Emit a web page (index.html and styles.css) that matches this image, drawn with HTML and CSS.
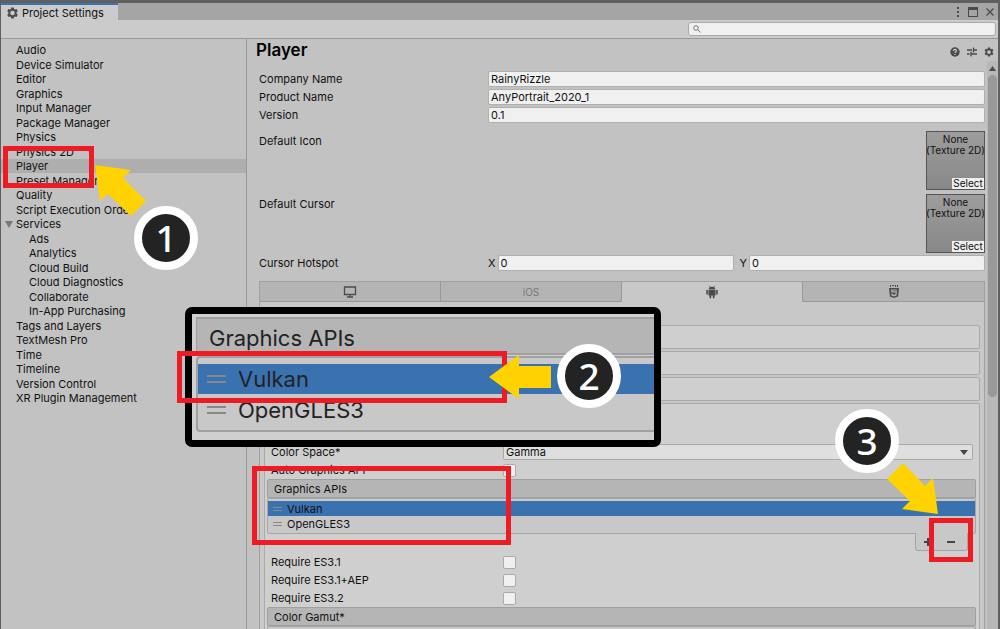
FILE: index.html
```html
<!DOCTYPE html>
<html lang="en">
<head>
<meta charset="utf-8">
<title>Project Settings</title>
<link rel="stylesheet" href="styles.css">
</head>
<body>
<svg class="defs" aria-hidden="true">
  <symbol id="gear" viewBox="0 0 24 24"><path fill-rule="evenodd" d="M9.5 1h5l.7 3.2 1.8 1 3.1-1 2.5 4.3-2.4 2.2v2.6l2.4 2.2-2.5 4.3-3.1-1-1.8 1-.7 3.2h-5l-.7-3.2-1.8-1-3.1 1-2.5-4.3 2.4-2.2v-2.6L1.400 8.500l2.500-4.300 3.100 1 1.800-1zM12 7.500a4.500 4.500 0 1 0 0 9a4.500 4.500 0 0 0 0-9z"/></symbol>
</svg>
<div class="window">
  <header class="tabbar">
    <div class="tab"><svg class="tab-icon"><use href="#gear"/></svg>Project Settings</div>
    <div class="window-buttons">
      <button aria-label="Menu"><svg width="4" height="12" viewBox="0 0 4 12"><path d="M1 1h2v2H1zM1 5h2v2H1zM1 9h2v2H1z"/></svg></button>
      <button aria-label="Maximize"><svg width="10" height="10" viewBox="0 0 10 10"><path fill-rule="evenodd" d="M0 0h10v10H0zM1 3v6h8V3z"/></svg></button>
      <button aria-label="Close"><svg width="8" height="8" viewBox="0 0 8 8"><path class="line" d="M.5.5l7 7M7.500.5l-7 7"/></svg></button>
    </div>
  </header>
  <div class="toolbar">
    <label class="search"><svg width="8" height="8" viewBox="0 0 8 8"><circle class="thin" cx="3" cy="3" r="2.300"/><path class="thin" d="M4.800 4.800L7.500 7.500"/></svg><input type="search" aria-label="Search settings"></label>
  </div>
  <div class="content">
    <nav class="sidebar">
      <ul>
        <li><a href="#">Audio</a></li>
        <li><a href="#">Device Simulator</a></li>
        <li><a href="#">Editor</a></li>
        <li><a href="#">Graphics</a></li>
        <li><a href="#">Input Manager</a></li>
        <li><a href="#">Package Manager</a></li>
        <li><a href="#">Physics</a></li>
        <li><a href="#">Physics 2D</a></li>
        <li class="selected"><a href="#">Player</a></li>
        <li><a href="#">Preset Manager</a></li>
        <li><a href="#">Quality</a></li>
        <li><a href="#">Script Execution Order</a></li>
        <li class="parent"><svg width="8" height="7" viewBox="0 0 8 7"><path d="M0 0h8L4 7z"/></svg><a href="#">Services</a></li>
        <li class="child"><a href="#">Ads</a></li>
        <li class="child"><a href="#">Analytics</a></li>
        <li class="child"><a href="#">Cloud Build</a></li>
        <li class="child"><a href="#">Cloud Diagnostics</a></li>
        <li class="child"><a href="#">Collaborate</a></li>
        <li class="child"><a href="#">In-App Purchasing</a></li>
        <li><a href="#">Tags and Layers</a></li>
        <li><a href="#">TextMesh Pro</a></li>
        <li><a href="#">Time</a></li>
        <li><a href="#">Timeline</a></li>
        <li><a href="#">Version Control</a></li>
        <li><a href="#">XR Plugin Management</a></li>
      </ul>
    </nav>
    <main class="main">
      <div class="title-row">
        <h1>Player</h1>
        <div class="title-icons">
          <button aria-label="Help"><svg width="10" height="10" viewBox="0 0 10 10"><circle cx="5" cy="5" r="4.700"/><path class="mark" d="M3.500 3.900c0-2 3-2 3-.2 0 1.100-1.500 1.100-1.500 2.400M5 7v1.100"/></svg></button>
          <button aria-label="Presets"><svg width="10" height="10" viewBox="0 0 10 10"><path class="line" d="M0 3h5M6.500 3H10M6.500 .5v5M0 7h2.500M4 7h6M4 4.800v4.700"/></svg></button>
          <button aria-label="Options"><svg width="10" height="10"><use href="#gear"/></svg></button>
        </div>
      </div>
      <div class="scroll">
        <div class="page">
          <div class="fields">
            <label for="company">Company Name</label><input id="company" type="text" value="RainyRizzle">
            <label for="product">Product Name</label><input id="product" type="text" value="AnyPortrait_2020_1">
            <label for="version">Version</label><input id="version" type="text" value="0.1">
          </div>
          <div class="texture-row"><span>Default Icon</span><div class="texture"><span>None<br>(Texture 2D)</span><button>Select</button></div></div>
          <div class="texture-row"><span>Default Cursor</span><div class="texture"><span>None<br>(Texture 2D)</span><button>Select</button></div></div>
          <div class="fields hotspot">
            <span>Cursor Hotspot</span>
            <div class="vector"><label for="hx">X</label><input id="hx" type="text" value="0"><label for="hy">Y</label><input id="hy" type="text" value="0"></div>
          </div>
          <section class="platform">
            <div class="platform-tabs">
              <button aria-label="Standalone"><svg width="14" height="12" viewBox="0 0 14 12"><path class="line" d="M1.500 1h11v7.500h-11zM7 8.500V11M4 11h6"/></svg></button>
              <button>iOS</button>
              <button class="active" aria-label="Android"><svg width="12" height="14" viewBox="0 0 12 14"><path d="M2.500 4.500a3.500 3 0 0 1 1.200-2L3 1l.5-.3.9 1.300a4 4 0 0 1 3.200 0L8.500.7 9 1l-.7 1.500a3.500 3 0 0 1 1.200 2zM2.500 5h7v5.500h-1v2.800H6.800v-2.800H5.200v2.800H3.500v-2.800h-1zM.3 5h1.600v4.500H.3zM10.100 5h1.600v4.500h-1.600z"/></svg></button>
              <button aria-label="WebGL"><svg width="10" height="13" viewBox="0 0 10 13"><path d="M1 0h1v2H1zM3 0h2v1H3zM6 0h1v2H6zM8 0h1v2H8z"/><path fill-rule="evenodd" d="M0 3h10l-.9 8.500L5 13 .9 11.500zM2 4.500l.4 3h4.300l-.2 1.700L5 9.700l-1.500-.5-.1-.8H2.200l.3 2L5 11.400l2.500-1 .5-4.200H3.500V5.500h4.600l.1-1z"/></svg></button>
            </div>
            <div class="platform-body">
              <button class="foldout" aria-label="Icon"></button>
              <button class="foldout" aria-label="Resolution and Presentation"></button>
              <button class="foldout" aria-label="Splash Image"></button>
              <div class="group">
                <div class="setting"><label for="space">Color Space*</label><select id="space"><option>Gamma</option></select></div>
                <div class="setting"><label for="auto">Auto Graphics API</label><input id="auto" type="checkbox"></div>
                <h2 class="list-title">Graphics APIs</h2>
                <ul class="api-list"><li class="picked"><i class="grip"></i>Vulkan</li><li><i class="grip"></i>OpenGLES3</li></ul>
                <div class="list-buttons">
                  <button aria-label="Add"><svg width="8" height="8" viewBox="0 0 8 8"><path class="bold" d="M0 4h8M4 0v8"/></svg></button>
                  <button aria-label="Remove"><svg width="8" height="8" viewBox="0 0 8 8"><path class="bold" d="M0 4h8"/></svg></button>
                </div>
                <div class="setting"><label for="es31">Require ES3.1</label><input id="es31" type="checkbox"></div>
                <div class="setting"><label for="aep">Require ES3.1+AEP</label><input id="aep" type="checkbox"></div>
                <div class="setting"><label for="es32">Require ES3.2</label><input id="es32" type="checkbox"></div>
                <h2 class="list-title">Color Gamut*</h2>
                <ul class="api-list"><li></li></ul>
              </div>
            </div>
          </section>
        </div>
        <div class="scrollbar"><svg width="7" height="5" viewBox="0 0 7 5"><path d="M3.500 0L7 5H0z"/></svg><div class="thumb"></div></div>
      </div>
    </main>
  </div>
</div>

<div class="magnifier">
  <div class="mag-title">Graphics APIs</div>
  <ul class="mag-list"><li class="picked"><i class="grip"></i>Vulkan</li><li><i class="grip"></i>OpenGLES3</li></ul>
</div>
<div class="frame frame-player"></div>
<div class="frame frame-vulkan"></div>
<div class="frame frame-apis"></div>
<div class="frame frame-remove"></div>
<svg class="arrow arrow-player" width="51" height="51" viewBox="0 0 51 51"><path d="M0 0L36 5 28 13 51 36 36 51 13 29 5 36z"/></svg>
<svg class="arrow arrow-vulkan" width="62" height="44" viewBox="0 0 62 44"><path d="M0 22L30 0V11H62V33H30V44z"/></svg>
<svg class="arrow arrow-remove" width="51" height="51" viewBox="0 0 51 51"><path d="M51 51L46 15 38 23 16 0 0 16 23 38 15 46z"/></svg>
<div class="step step-1">1</div>
<div class="step step-2">2</div>
<div class="step step-3">3</div>
</body>
</html>
```
FILE: styles.css
```css
* { box-sizing: border-box; }
body { margin: 0; height: 100vh; overflow: hidden; position: relative; background: #5f5f5f; color: #111; font: 11px/14px Inter, sans-serif; }
button, input, select { font: inherit; color: inherit; margin: 0; padding: 0; border: 0; background: none; }
ul { list-style: none; margin: 0; padding: 0; }
svg { fill: #4b4b4b; display: block; flex: none; }
.defs { position: absolute; width: 0; height: 0; }
.line { fill: none; stroke: #4b4b4b; stroke-width: 1.3; }
.thin { fill: none; stroke: #777; stroke-width: 1; }
.bold { fill: none; stroke: #444; stroke-width: 2; }
.mark { fill: none; stroke: #c8c8c8; stroke-width: 1.2; }

.window { height: 100%; display: flex; flex-direction: column; padding: 3px 2px 0 1px; }
.tabbar { display: flex; justify-content: space-between; height: 17px; background: #a5a5a5; flex: none; }
.tab { display: flex; align-items: center; gap: 3px; padding: 0 14px 0 5px; background: #cbcbcb; border-top: 2px solid #3a72b0; }
.tab-icon { width: 13px; height: 12px; }
.window-buttons { display: flex; align-items: center; gap: 8px; padding-right: 4px; }
.toolbar { display: flex; justify-content: flex-end; height: 19px; padding: 2px; background: #cbcbcb; border-bottom: 1px solid #999; flex: none; }
.search { display: flex; align-items: center; gap: 4px; width: 308px; padding: 0 4px; background: #f0f0f0; border: 1px solid #aaa; border-radius: 3px; }
.search input { flex: 1; min-width: 0; height: 12px; outline: 0; }

.content { flex: 1; min-height: 0; display: flex; background: #c2c2c2; }
.sidebar { width: 246px; flex: none; padding-top: 4px; border-right: 1px solid #999; }
.sidebar li { display: flex; align-items: center; height: 14px; padding-left: 15px; }
.sidebar li:nth-child(even) { height: 15px; }
.sidebar .child { padding-left: 28px; }
.sidebar .parent { padding-left: 4px; gap: 3px; }
.sidebar .parent svg { fill: #777; }
.sidebar .selected { background: #aeaeae; }
.sidebar a { color: inherit; text-decoration: none; }

.main { flex: 1; min-width: 0; display: flex; flex-direction: column; }
.title-row { display: flex; justify-content: space-between; height: 22px; padding: 0 4px 0 9px; flex: none; }
h1 { margin: 0; font-size: 17px; line-height: 22px; font-weight: 600; color: #000; }
.title-icons { display: flex; align-items: center; gap: 7px; padding-top: 4px; }
.scroll { flex: 1; min-height: 0; display: flex; overflow: hidden; }
.page { flex: 1; min-width: 0; padding: 10px 2px 0 12px; }
.scrollbar { width: 11px; flex: none; display: flex; flex-direction: column; align-items: center; gap: 4px; padding-top: 5px; background: #b8b8b8; }
.thumb { width: 9px; height: 322px; background: #999; border-radius: 5px; }

.fields { display: grid; grid-template-columns: 229px 1fr; row-gap: 2px; align-items: center; }
input[type="text"] { width: 100%; min-width: 0; height: 16px; padding: 0 2px; background: #f0f0f0; border: 1px solid #b0b0b0; border-radius: 2px; }
.texture-row { display: flex; justify-content: space-between; margin-top: 4px; line-height: 20px; }
.fields + .texture-row { margin-top: 8px; }
.texture { width: 59px; height: 59px; display: flex; flex-direction: column; justify-content: space-between; align-items: flex-end; border: 1px solid #555; background: linear-gradient(#9d9d9d, #888); font-size: 10px; line-height: 11px; }
.texture span { width: 57px; padding-top: 2px; text-align: center; white-space: nowrap; display: flex; justify-content: center; }
.texture button { width: 32px; height: 11px; background: #eee; line-height: 11px; }
.hotspot { margin-top: 2px; }
.vector { display: flex; align-items: center; gap: 2px; }
.vector input { flex: 1; width: 0; }
.vector label + input + label { padding-left: 4px; }

.platform { margin-top: 10px; border: 1px solid #a0a0a0; background: #c8c8c8; }
.platform-tabs { display: grid; grid-template-columns: repeat(4, 1fr); height: 20px; }
.platform-tabs button { display: flex; align-items: center; justify-content: center; background: #b4b4b4; border-right: 1px solid #999; border-bottom: 1px solid #999; color: #777; font-size: 10px; }
.platform-tabs .active { background: #c8c8c8; border-bottom: 0; }
.platform-tabs button:last-child { border-right: 0; }
.platform-body { display: flex; flex-direction: column; gap: 2px; padding: 23px 4px 0; }
.foldout { height: 24px; background: #cfcfcf; border: 1px solid #aaa; border-radius: 2px; }
.group { padding: 39px 3px 0 2px; background: #cfcfcf; border: 1px solid #aaa; border-radius: 2px; }
.setting { display: grid; grid-template-columns: 232px 1fr; align-items: center; height: 18px; padding: 0 3px 0 4px; }
select { appearance: none; height: 16px; padding: 0 2px; border: 1px solid #aaa; border-radius: 2px; background: #dfdfdf; line-height: 14px; }
.setting:has(select) { position: relative; }
.setting:has(select)::after { content: ""; position: absolute; right: 8px; top: 7px; border: 4px solid transparent; border-top: 5px solid #444; border-bottom: 0; }
input[type="checkbox"] { appearance: none; width: 13px; height: 13px; border: 1px solid #aaa; border-radius: 2px; background: #f0f0f0; }
.list-title { margin: 0; height: 19px; padding: 0 6px; font-size: 11px; line-height: 18px; font-weight: 400; background: #b5b5b5; border: 1px solid #a0a0a0; border-radius: 2px 2px 0 0; }
.api-list { padding: 2px 0; border: 1px solid #a5a5a5; border-radius: 2px; background: #c8c8c8; }
.api-list li { display: flex; align-items: center; gap: 5px; height: 15px; padding-left: 5px; }
.picked { background: #3a72b0; }
.grip { width: 9px; height: 4px; border: solid #888; border-width: 1px 0; }
.list-buttons { display: flex; width: 53px; height: 18px; margin: -1px 8px 2px auto; padding-right: 4px; border: 1px solid #a5a5a5; border-top: 0; border-radius: 0 0 3px 3px; background: #c8c8c8; }
.list-buttons button { flex: 1; display: grid; place-items: center; }

.magnifier { position: absolute; left: 185px; top: 307px; width: 476px; height: 140px; padding: 3px 0 0 4px; border: 7px solid #000; border-radius: 7px; background: #cfcfcf; color: #222; font-size: 22px; overflow: hidden; }
.mag-title { height: 38px; padding-left: 12px; line-height: 38px; background: #b5b5b5; border: solid #a0a0a0; border-width: 2px 0 2px 1px; }
.mag-list { margin-top: 1px; padding: 6px 0 4px; border: solid #a0a0a0; border-width: 2px 0 2px 2px; border-radius: 4px 0 0 4px; background: #c8c8c8; }
.mag-list li { display: flex; align-items: center; gap: 12px; height: 32px; padding-left: 9px; }
.mag-list .picked { height: 30px; }
.mag-list .grip { width: 19px; height: 8px; border-width: 2px 0; }

.frame { position: absolute; border: 5px solid #ed1c24; }
.frame-player { left: 3px; top: 146px; width: 91px; height: 42px; }
.frame-vulkan { left: 177px; top: 351px; width: 330px; height: 52px; }
.frame-apis { left: 252px; top: 466px; width: 259px; height: 79px; }
.frame-remove { left: 929px; top: 518px; width: 44px; height: 44px; }
.arrow { position: absolute; fill: #ffd200; }
.arrow-player { left: 95px; top: 165px; }
.arrow-vulkan { left: 489px; top: 355px; }
.arrow-remove { left: 887px; top: 463px; }
.step { position: absolute; width: 64px; height: 64px; border: 8px solid #fff; border-radius: 50%; background: #232323; color: #fff; font: 500 37px/48px "Noto Sans", sans-serif; text-align: center; }
.step-1 { left: 134px; top: 206px; }
.step-2 { left: 557px; top: 344px; }
.step-3 { left: 835px; top: 409px; }
```
